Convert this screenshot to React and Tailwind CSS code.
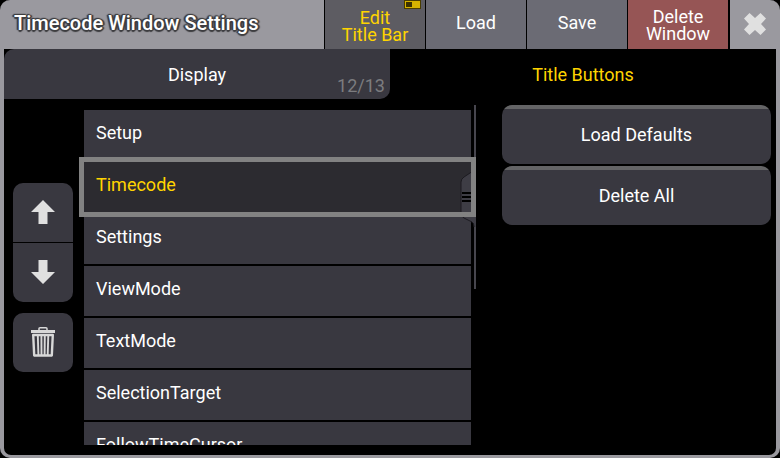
import { useState } from "react";
import clsx from "clsx";

const ITEMS = ["Setup", "Timecode", "Settings", "ViewMode", "TextMode", "SelectionTarget", "FollowTimeCursor"];

function ArrowIcon({ className }) {
  return (
    <svg viewBox="0 0 24 24" className={clsx("w-6 h-6", className)} fill="#e0e0e0" aria-hidden="true">
      <path d="M12 0L24 12H16.5V24H7.5V12H0z" />
    </svg>
  );
}

function TrashIcon() {
  return (
    <svg viewBox="0 0 24 30" className="w-6 h-[30px]" fill="none" stroke="#d8d8d8" aria-hidden="true">
      <path d="M8 3.5V1.8Q8 .8 9 .8H15Q16 .8 16 1.8V3.5" strokeWidth="1.5" />
      <path d="M0 4.5H24" strokeWidth="3" />
      <path d="M2.2 8H21.8L20.8 28.5H3.2z" strokeWidth="2.4" strokeLinejoin="round" />
      <path d="M6.8 8L7.4 28M10.4 8L10.5 28M13.8 8L13.6 28M17.3 8L16.7 28" strokeWidth="1.9" />
    </svg>
  );
}

function CloseIcon() {
  return (
    <svg viewBox="0 0 22 22" className="w-[22px] h-[22px]" fill="#e0e0e0" aria-hidden="true">
      <path d="M5.5 0L11 5L16.5 0L22 5.5L17 11L22 16.5L16.5 22L11 17L5.5 22L0 16.5L5 11L0 5.5z" />
    </svg>
  );
}

function HeaderButton({ className, children }) {
  return (
    <button type="button" className={clsx("relative w-[100px] shrink-0 leading-[17px]", className)}>
      {children}
    </button>
  );
}

function ActionButton({ children }) {
  return (
    <button type="button" className="h-[59px] w-full overflow-hidden rounded-[10px] bg-[linear-gradient(#646466_4px,#393840_4px)]">
      {children}
    </button>
  );
}

function ScrollHandle() {
  return (
    <div className="pointer-events-none absolute right-0 top-0 z-10 w-4">
      <div className="ml-auto h-[184px] w-[2px] bg-[#47464e]" />
      <svg viewBox="0 0 16 60" className="absolute right-0 top-[64px] h-[60px] w-4" aria-hidden="true">
        <path d="M16 0L4 8Q1 10 1 13V45Q1 47 4 49L12 53Q14 54 14 58H16z" fill="#3e3d45" />
        <path d="M16 0L4 8Q1 10 1 13V45Q1 47 4 49L12 53Q14 54 14 58" fill="none" stroke="#1c1b20" strokeWidth="1" />
        <path d="M2 24H12M2 28H12M2 32H12" stroke="#000" strokeWidth="2" />
      </svg>
    </div>
  );
}

export default function App() {
  const [selected, setSelected] = useState("Timecode");

  return (
    <div className="h-screen bg-black font-['Roboto',sans-serif] text-lg text-white">
      <div className="flex h-full flex-col overflow-hidden rounded-[10px] bg-[#9a999f]">
        <header className="flex h-[49px] shrink-0 gap-px bg-black">
          <h1 className="flex flex-1 items-center bg-[#9a999f] pb-1 pl-3.5 text-xl font-medium whitespace-nowrap [text-shadow:1px_0_1px_#3f3f42,-1px_0_1px_#3f3f42,0_1px_1px_#3f3f42,0_-1px_1px_#3f3f42,1px_1px_1px_#3f3f42,-1px_-1px_1px_#3f3f42,2px_0_1px_#3f3f42,-2px_0_1px_#3f3f42,0_2px_1px_#3f3f42]">
            Timecode Window Settings
          </h1>
          <HeaderButton className="bg-[#5d5c62] pt-0.5 text-[#ffd400]">
            Edit
            <br />
            Title Bar
            <span className="absolute right-1 top-0 flex h-[9px] w-[17px] items-center border border-[#4a3d00] bg-[#d6b300] pl-px">
              <span className="h-[5px] w-[6px] bg-[#3c3200]" />
            </span>
          </HeaderButton>
          <HeaderButton className="bg-[#6b6b74] pb-1">Load</HeaderButton>
          <HeaderButton className="bg-[#6b6b74] pb-1">Save</HeaderButton>
          <HeaderButton className="bg-[#965555]">
            Delete
            <br />
            Window
          </HeaderButton>
          <button type="button" aria-label="Close" className="ml-px flex w-[50px] shrink-0 items-center justify-center bg-[#9a999f] pb-0.5">
            <CloseIcon />
          </button>
        </header>

        <div className="mx-1 mb-[3px] flex min-h-0 flex-1 flex-col overflow-hidden rounded-b-[7px] bg-black">
          <div className="flex h-[50px] shrink-0">
            <button type="button" className="relative flex-1 rounded-tl-[10px] rounded-br-[10px] bg-[#393840] pt-0.5">
              Display
              <span className="absolute bottom-0 right-[5px] leading-[26px] text-[#7c7c7f]">12/13</span>
            </button>
            <button type="button" className="flex-1 pt-0.5 text-[#ffd400]">
              Title Buttons
            </button>
          </div>

          <main className="flex min-h-0 flex-1 pt-1.5">
            <div className="flex w-[75px] shrink-0 flex-col justify-center gap-[11px] pb-1.5 pl-[9px]">
              <div className="flex w-[60px] flex-col gap-px">
                <button type="button" aria-label="Move up" className="flex h-[59px] items-center justify-center rounded-t-[10px] bg-[#393840]">
                  <ArrowIcon />
                </button>
                <button type="button" aria-label="Move down" className="flex h-[59px] items-center justify-center rounded-b-[10px] bg-[#393840]">
                  <ArrowIcon className="rotate-180" />
                </button>
              </div>
              <button type="button" aria-label="Delete" className="flex h-[59px] w-[60px] items-center justify-center rounded-[10px] bg-[#393840]">
                <TrashIcon />
              </button>
            </div>

            <div className="relative mb-2.5 min-w-0 flex-1 overflow-hidden">
              <ul className="flex flex-col gap-0.5 p-[5px]">
                {ITEMS.map((item) => (
                  <li key={item} className="relative h-[50px]">
                    <button
                      type="button"
                      onClick={() => setSelected(item)}
                      className={clsx(
                        "h-full w-full px-3 pb-1 text-left",
                        selected === item
                          ? "bg-[#2c2b30] text-[#ffd400] after:absolute after:-inset-[5px] after:z-20 after:border-[5px] after:border-[#828282]"
                          : "bg-[#393840]"
                      )}
                    >
                      {item}
                    </button>
                  </li>
                ))}
              </ul>
              <ScrollHandle />
            </div>

            <div className="flex w-[300px] shrink-0 flex-col gap-0.5 pl-[26px] pr-[5px]">
              <ActionButton>Load Defaults</ActionButton>
              <ActionButton>Delete All</ActionButton>
            </div>
          </main>
        </div>
      </div>
    </div>
  );
}
